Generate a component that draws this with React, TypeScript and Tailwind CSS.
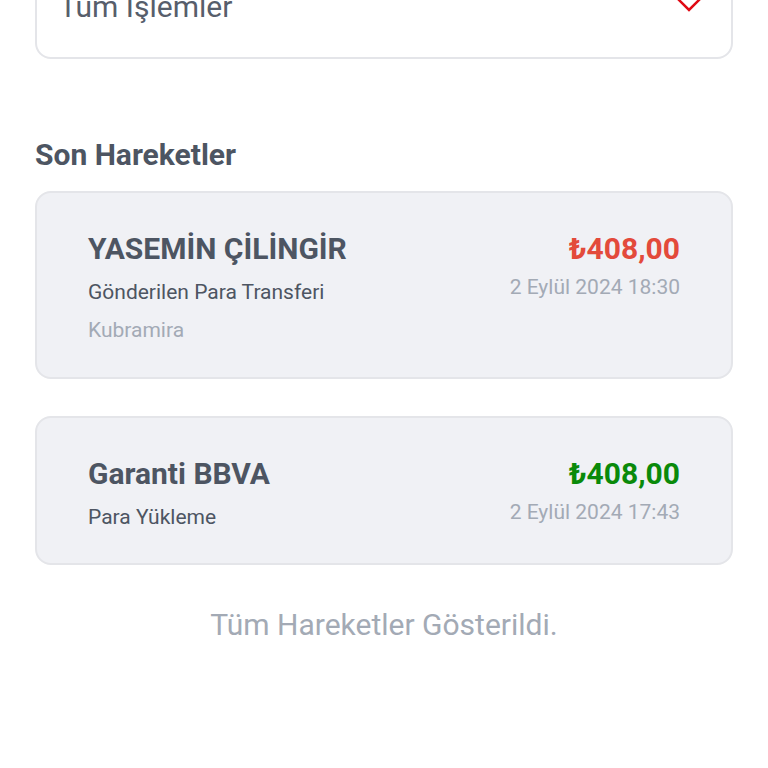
import React from "react";

function Card({
  name,
  type,
  note,
  amount,
  amountClass,
  date,
}: {
  name: string;
  type: string;
  note?: string;
  amount: string;
  amountClass: string;
  date: string;
}) {
  return (
    <div className="rounded-[16px] border-2 border-[#e4e5e9] bg-[#f0f1f5] pl-[51px] pr-[51px] pt-[38px] pb-[32px] flex justify-between">
      <div className="flex flex-col">
        <div className="text-[30px] leading-[36px] font-bold text-[#4d5562]">{name}</div>
        <div className="mt-[11px] text-[21px] leading-[28px] text-[#4d5562]">{type}</div>
        {note && <div className="mt-[10px] mb-[1px] text-[21px] leading-[28px] text-[#a3aab5]">{note}</div>}
      </div>
      <div className="flex flex-col items-end">
        <div className={`text-[30px] leading-[36px] font-bold ${amountClass}`}>{amount}</div>
        <div className="mt-[6px] text-[21px] leading-[28px] text-[#a3aab5]">{date}</div>
      </div>
    </div>
  );
}

export default function App() {
  return (
    <div className="w-[768px] h-[768px] overflow-hidden bg-white" style={{ fontFamily: "Roboto, 'Noto Sans', sans-serif" }}>
      <div className="px-[35px] -mt-[41px]">
        <div className="rounded-[16px] border-2 border-[#e4e5e9] bg-white h-[100px] flex items-start justify-between pl-[22px] pr-[26px]">
          <span className="mt-[28px] text-[30px] leading-[36px] text-[#575e6b]">Tüm İşlemler</span>
          <svg width="32" height="20" viewBox="0 0 32 20" className="mt-[33px]">
            <polyline points="2,2 16,16 30,2" fill="none" stroke="#e00a14" strokeWidth="2.5" />
          </svg>
        </div>
        <div className="mt-[78px] text-[30px] leading-[36px] font-bold text-[#4d5562]">Son Hareketler</div>
        <div className="mt-[18px] flex flex-col gap-[37px]">
          <Card
            name="YASEMİN ÇİLİNGİR"
            type="Gönderilen Para Transferi"
            note="Kubramira"
            amount="₺408,00"
            amountClass="text-[#e34a3b]"
            date="2 Eylül 2024 18:30"
          />
          <Card
            name="Garanti BBVA"
            type="Para Yükleme"
            amount="₺408,00"
            amountClass="text-[#0a8a0a]"
            date="2 Eylül 2024 17:43"
          />
        </div>
        <div className="mt-[42px] text-center text-[30px] leading-[36px] text-[#a3aab5]">Tüm Hareketler Gösterildi.</div>
      </div>
    </div>
  );
}
